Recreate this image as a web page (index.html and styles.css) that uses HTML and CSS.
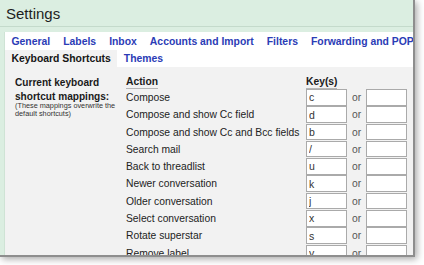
FILE: index.html
```html
<!DOCTYPE html>
<html>
<head>
<meta charset="utf-8">
<link rel="stylesheet" href="styles.css">
</head>
<body>
<div class="shot">
  <div class="header">Settings</div>
  <div class="main">
    <div class="tabrow first">
      <span class="tab">General</span>
      <span class="tab">Labels</span>
      <span class="tab">Inbox</span>
      <span class="tab">Accounts and Import</span>
      <span class="tab">Filters</span>
      <span class="tab">Forwarding and POP/IMAP</span>
    </div>
    <div class="tabrow">
      <span class="tab active">Keyboard Shortcuts</span>
      <span class="tab">Themes</span>
    </div>
    <div class="content">
      <div class="intro">
        <div class="intro-title">Current keyboard shortcut mappings:</div>
        <div class="intro-note">(These mappings overwrite the default shortcuts)</div>
      </div>
      <div class="table">
        <div class="th"><span>Action</span></div>
        <div class="th key-h"><span>Key(s)</span></div>

        <div class="act">Compose</div>
        <input class="key" type="text" value="c"><div class="or">or</div><input class="key" type="text" value="">

        <div class="act">Compose and show Cc field</div>
        <input class="key" type="text" value="d"><div class="or">or</div><input class="key" type="text" value="">

        <div class="act">Compose and show Cc and Bcc fields</div>
        <input class="key" type="text" value="b"><div class="or">or</div><input class="key" type="text" value="">

        <div class="act">Search mail</div>
        <input class="key" type="text" value="/"><div class="or">or</div><input class="key" type="text" value="">

        <div class="act">Back to threadlist</div>
        <input class="key" type="text" value="u"><div class="or">or</div><input class="key" type="text" value="">

        <div class="act">Newer conversation</div>
        <input class="key" type="text" value="k"><div class="or">or</div><input class="key" type="text" value="">

        <div class="act">Older conversation</div>
        <input class="key" type="text" value="j"><div class="or">or</div><input class="key" type="text" value="">

        <div class="act">Select conversation</div>
        <input class="key" type="text" value="x"><div class="or">or</div><input class="key" type="text" value="">

        <div class="act">Rotate superstar</div>
        <input class="key" type="text" value="s"><div class="or">or</div><input class="key" type="text" value="">

        <div class="act">Remove label</div>
        <input class="key" type="text" value="y"><div class="or">or</div><input class="key" type="text" value="">
      </div>
    </div>
  </div>
</div>
</body>
</html>
```

FILE: styles.css
```css
html, body {
  margin: 0;
  padding: 0;
  background: #ffffff;
  overflow: hidden;
}
body {
  width: 424px;
  height: 265px;
  font-family: "Liberation Sans", Arial, sans-serif;
}
.shot {
  width: 413px;
  height: 255px;
  border-right: 2px solid #8e8e8e;
  border-bottom: 2px solid #8e8e8e;
  background: #dbeee1;
  box-shadow: 2px 2px 7px rgba(0, 0, 0, 0.35);
  display: flex;
  flex-direction: column;
  overflow: hidden;
}
.header {
  height: 26px;
  line-height: 27px;
  padding-left: 6px;
  font-size: 15px;
  color: #1e1e1e;
  border-bottom: 1px solid #c4dacb;
  flex: none;
}
.main {
  margin: 5px 0 0 4px;
  background: #ffffff;
  flex: 1;
  display: flex;
  flex-direction: column;
  min-height: 0;
  border-left: 1px solid #cfe3d5;
}
.tabrow {
  display: flex;
  height: 17px;
  flex: none;
  white-space: nowrap;
}
.tabrow.first {
  padding-top: 1px;
}
.tab {
  padding: 0 6.5px;
  line-height: 17px;
  font-size: 10.4px;
  font-weight: bold;
  color: #2b3cb6;
}
.tab.active {
  background: #f2f2f2;
  color: #151515;
}
.content {
  flex: 1;
  background: #f2f2f2;
  display: flex;
  padding-top: 8px;
  min-height: 0;
}
.intro {
  padding-left: 10px;
  box-sizing: border-box;
  width: 121px;
  flex: none;
}
.intro-title {
  font-size: 10.1px;
  font-weight: bold;
  line-height: 13.5px;
  color: #1a1a1a;
  padding-top: 1px;
}
.intro-note {
  font-size: 7.3px;
  line-height: 8px;
  color: #333333;
  margin-top: -1px;
  padding-right: 2px;
}
.table {
  display: grid;
  grid-template-columns: 180px 41px 19px 41px;
  grid-template-rows: 14px;
  grid-auto-rows: 17.3px;
  align-content: start;
}
.th {
  font-size: 10.3px;
  font-weight: bold;
  color: #1a1a1a;
  line-height: 14px;
}
.th span {
  display: inline-block;
  line-height: 12px;
  border-bottom: 1px solid #b5b5b5;
}
.key-h {
  grid-column: 2 / span 3;
}
.act {
  font-size: 10.3px;
  line-height: 17.3px;
  color: #222222;
  white-space: nowrap;
}
.key {
  box-sizing: border-box;
  width: 41px;
  height: 16.5px;
  margin: 0;
  border: 1px solid #aaaaaa;
  background: #ffffff;
  padding: 0 2px;
  font-family: "Liberation Sans", Arial, sans-serif;
  font-size: 10.5px;
  color: #333333;
  outline: none;
}
.or {
  font-size: 10.3px;
  line-height: 17.3px;
  color: #555555;
  text-align: center;
}
```
